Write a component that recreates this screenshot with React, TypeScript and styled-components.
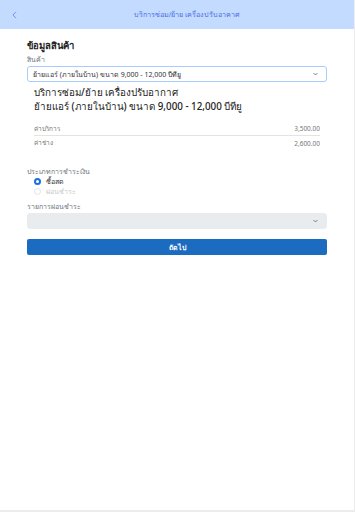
import React from "react";
import styled, { createGlobalStyle } from "styled-components";

const Global = createGlobalStyle`
  html, body { margin: 0; padding: 0; background: #ececec; }
  body { font-family: "Noto Sans", "Open Sans", sans-serif; color: #212529; }
  * { box-sizing: border-box; }
`;

const Page = styled.div`
  width: 354px;
  height: 510px;
  background: #fff;
  display: flex;
  flex-direction: column;
`;

const Header = styled.div`
  height: 29px;
  background: #c2dbff;
  display: flex;
  align-items: center;
  padding-left: 12px;
`;

const Back = styled.div`
  width: 10px;
  display: flex;
  align-items: center;
`;

const Title = styled.div`
  flex: 1;
  text-align: center;
  font-size: 7.2px;
  color: #4f6fe3;
  padding-right: 2px;
`;

const Content = styled.div`
  padding: 10px 27px 0 27px;
  display: flex;
  flex-direction: column;
`;

const SectionTitle = styled.div`
  font-size: 9.5px;
  font-weight: 600;
  color: #222;
  line-height: 13px;
`;

const Label = styled.div<{ $mt?: number }>`
  font-size: 7px;
  color: #6c757d;
  line-height: 9px;
  margin-top: ${(p) => p.$mt ?? 0}px;
`;

const Select = styled.div<{ $disabled?: boolean }>`
  height: 16px;
  margin-top: 2px;
  border-radius: 3px;
  border: ${(p) => (p.$disabled ? "1px solid #e9ecef" : "1.5px solid #a9ccff")};
  background: ${(p) => (p.$disabled ? "#e9ecef" : "#fff")};
  display: flex;
  align-items: center;
  justify-content: space-between;
  padding: 0 8px 0 5px;
  font-size: 7px;
  color: #333;
`;

const Product = styled.div`
  padding: 4px 7px 0 7px;
  display: flex;
  flex-direction: column;
`;

const ProductName = styled.div`
  font-size: 9.8px;
  font-weight: 500;
  color: #222;
  line-height: 14px;
`;

const Rows = styled.div`
  margin-top: 8px;
  display: flex;
  flex-direction: column;
`;

const Row = styled.div<{ $line?: boolean }>`
  display: flex;
  justify-content: space-between;
  font-size: 6.5px;
  color: #777;
  height: 14px;
  align-items: center;
  border-bottom: ${(p) => (p.$line ? "1px solid #e3e3e3" : "none")};
`;

const RadioRow = styled.label<{ $disabled?: boolean }>`
  display: flex;
  align-items: center;
  gap: 5px;
  font-size: 7px;
  color: ${(p) => (p.$disabled ? "#c8c8c8" : "#333")};
  height: 10.5px;
  padding-left: 7px;
`;

const Radio = styled.span<{ $checked?: boolean }>`
  width: 7px;
  height: 7px;
  border-radius: 50%;
  border: ${(p) => (p.$checked ? "2px solid #1a6fe0" : "1px solid #e3e3e3")};
  background: #fff;
`;

const Button = styled.button`
  margin-top: 10px;
  height: 16px;
  border: none;
  border-radius: 2px;
  background: #1b6bc0;
  color: #fff;
  font-family: inherit;
  font-size: 7px;
  font-weight: 600;
  padding: 0;
`;

const Chevron = ({ color = "#666" }: { color?: string }) => (
  <svg width="5" height="4" viewBox="0 0 5 4">
    <path d="M0.5 1 L2.5 3 L4.5 1" stroke={color} strokeWidth="0.8" fill="none" />
  </svg>
);

export default function App() {
  return (
    <>
      <Global />
      <Page>
        <Header>
          <Back>
            <svg width="5" height="8" viewBox="0 0 5 8">
              <path d="M4 0.8 L1 4 L4 7.2" stroke="#6b8ff0" strokeWidth="0.9" fill="none" />
            </svg>
          </Back>
          <Title>บริการซ่อม/ย้าย เครื่องปรับอาคาศ</Title>
        </Header>
        <Content>
          <SectionTitle>ข้อมูลสินค้า</SectionTitle>
          <Label $mt={3}>สินค้า</Label>
          <Select>
            <span>ย้ายแอร์ (ภายในบ้าน) ขนาด 9,000 - 12,000 บีทียู</span>
            <Chevron />
          </Select>
          <Product>
            <ProductName>บริการซ่อม/ย้าย เครื่องปรับอากาศ</ProductName>
            <ProductName>ย้ายแอร์ (ภายในบ้าน) ขนาด 9,000 - 12,000 บีทียู</ProductName>
            <Rows>
              <Row $line>
                <span>ค่าบริการ</span>
                <span>3,500.00</span>
              </Row>
              <Row>
                <span>ค่าช่าง</span>
                <span>2,600.00</span>
              </Row>
            </Rows>
          </Product>
          <Label $mt={17}>ประเภทการชำระเงิน</Label>
          <RadioRow>
            <Radio $checked />
            ซื้อสด
          </RadioRow>
          <RadioRow $disabled>
            <Radio />
            ผ่อนชำระ
          </RadioRow>
          <Label $mt={5}>รายการผ่อนชำระ</Label>
          <Select $disabled>
            <span />
            <Chevron />
          </Select>
          <Button>ถัดไป</Button>
        </Content>
      </Page>
    </>
  );
}
